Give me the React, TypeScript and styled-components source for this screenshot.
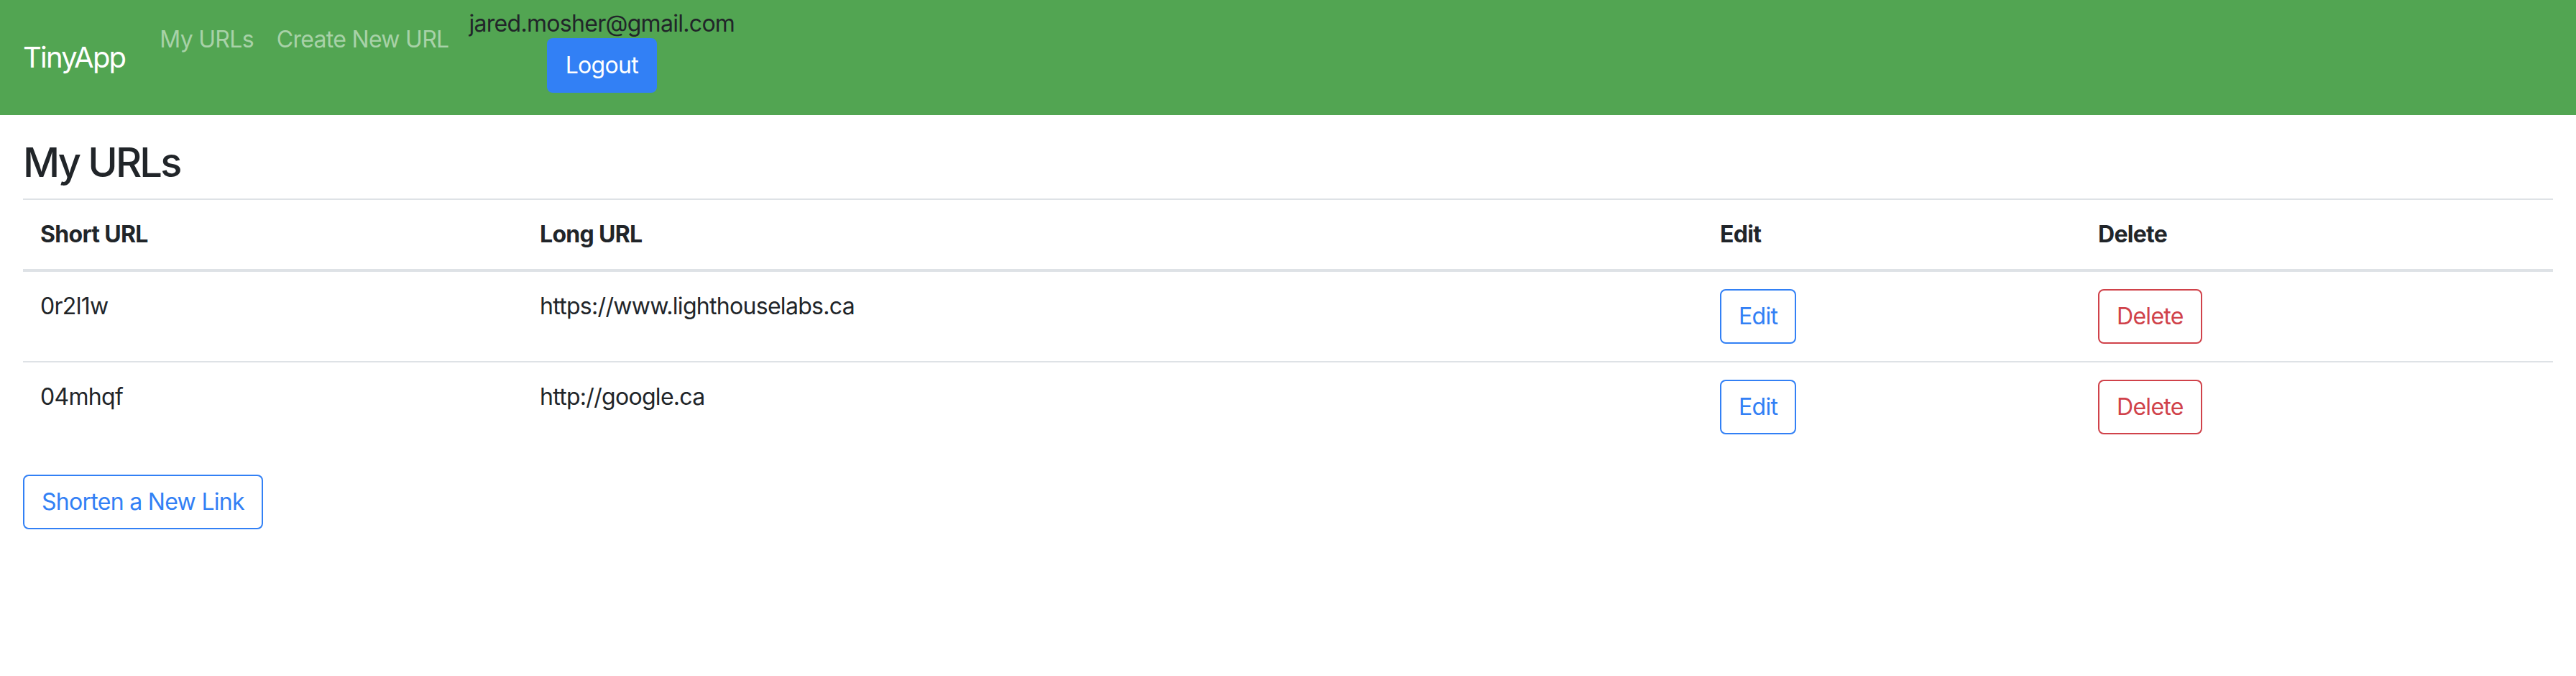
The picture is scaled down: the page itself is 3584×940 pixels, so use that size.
import React from "react";
import styled, { createGlobalStyle, css } from "styled-components";

const GlobalStyle = createGlobalStyle`
  html, body {
    margin: 0;
    padding: 0;
    background: #ffffff;
  }
  body {
    font-family: Inter, "Noto Sans", "Liberation Sans", sans-serif;
    font-size: 32px;
    line-height: 48px;
    letter-spacing: -0.022em;
    color: #212529;
  }
  * { box-sizing: border-box; }
`;

const Navbar = styled.nav`
  display: flex;
  align-items: flex-start;
  height: 160px;
  padding: 0 32px;
  background: #52a552;
`;

const Brand = styled.a`
  align-self: center;
  padding: 10px 0;
  margin-right: 32px;
  font-size: 40px;
  line-height: 60px;
  letter-spacing: -0.045em;
  color: #ffffff;
  text-decoration: none;
  white-space: nowrap;
`;

const NavList = styled.ul`
  display: flex;
  list-style: none;
  margin: 15px 0 0;
  padding: 0;
`;

const NavLink = styled.a`
  display: block;
  padding: 16px 16px;
  color: rgba(255, 255, 255, 0.5);
  text-decoration: none;
  white-space: nowrap;
`;

const UserBox = styled.div`
  display: flex;
  flex-direction: column;
  align-items: center;
  margin-left: 12px;
  padding-top: 13px;
`;

const Email = styled.div`
  line-height: 40px;
  color: #212529;
  white-space: nowrap;
`;

type Variant = "primary" | "outline-primary" | "outline-danger";

const Button = styled.button<{ $variant: Variant }>`
  display: inline-block;
  font-family: inherit;
  font-size: 32px;
  line-height: 48px;
  letter-spacing: -0.022em;
  padding: 12px 24px;
  border: 2px solid transparent;
  border-radius: 8px;
  background: transparent;
  cursor: pointer;
  white-space: nowrap;
  ${({ $variant }) =>
    $variant === "primary"
      ? css`
          background: #3280f5;
          border-color: #3280f5;
          color: #ffffff;
        `
      : $variant === "outline-primary"
      ? css`
          border-color: #3280f5;
          color: #3280f5;
        `
      : css`
          border-color: #d0424a;
          color: #d0424a;
        `}
`;

const Main = styled.main`
  padding: 0 32px;
`;

const Heading = styled.h3`
  margin: 33px 0 16px;
  font-size: 56px;
  line-height: 1.2;
  font-weight: 500;
  letter-spacing: -0.05em;
`;

const Table = styled.table`
  width: 100%;
  table-layout: fixed;
  border-collapse: collapse;
  margin-bottom: 32px;
`;

const Th = styled.th`
  padding: 24px;
  text-align: left;
  font-weight: 700;
  vertical-align: bottom;
  border-top: 2px solid #dee2e6;
  border-bottom: 4px solid #dee2e6;
`;

const Td = styled.td`
  padding: 24px;
  vertical-align: top;
  border-top: 2px solid #dee2e6;
`;

const urls = [
  { short: "0r2l1w", long: "https://www.lighthouselabs.ca" },
  { short: "04mhqf", long: "http://google.ca" },
];

export default function App() {
  return (
    <>
      <GlobalStyle />
      <Navbar>
        <Brand href="#">TinyApp</Brand>
        <NavList>
          <li>
            <NavLink href="#">My URLs</NavLink>
          </li>
          <li>
            <NavLink href="#">Create New URL</NavLink>
          </li>
        </NavList>
        <UserBox>
          <Email>jared.mosher@gmail.com</Email>
          <Button $variant="primary">Logout</Button>
        </UserBox>
      </Navbar>
      <Main>
        <Heading>My URLs</Heading>
        <Table>
          <colgroup>
            <col style={{ width: 695 }} />
            <col style={{ width: 1642 }} />
            <col style={{ width: 526 }} />
            <col style={{ width: 657 }} />
          </colgroup>
          <thead>
            <tr>
              <Th>Short URL</Th>
              <Th>Long URL</Th>
              <Th>Edit</Th>
              <Th>Delete</Th>
            </tr>
          </thead>
          <tbody>
            {urls.map((u) => (
              <tr key={u.short}>
                <Td>{u.short}</Td>
                <Td>{u.long}</Td>
                <Td>
                  <Button $variant="outline-primary">Edit</Button>
                </Td>
                <Td>
                  <Button $variant="outline-danger">Delete</Button>
                </Td>
              </tr>
            ))}
          </tbody>
        </Table>
        <Button $variant="outline-primary">Shorten a New Link</Button>
      </Main>
    </>
  );
}
